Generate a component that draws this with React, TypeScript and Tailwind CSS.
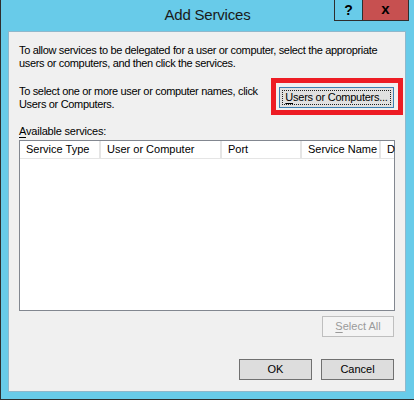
const columns = [
  { label: "Service Type", width: "w-[81px]" },
  { label: "User or Computer", width: "w-[121px]" },
  { label: "Port", width: "w-[80px]" },
  { label: "Service Name", width: "w-[79px]" },
  { label: "Description", width: "w-[14px]" },
];

function U({ children }: { children: string }) {
  return <span className="underline underline-offset-2">{children}</span>;
}

export default function App() {
  return (
    <div className="w-[414px] h-[400px] bg-[#68cbe9] border-l border-b border-[#2e2e2e] flex flex-col font-['Liberation_Sans',Arial,sans-serif] text-[11px] text-black">
      {/* Title bar */}
      <div className="relative h-[31px] flex items-center justify-center">
        <span className="text-[15px] text-[#1a1a1a] -mt-[1px] tracking-[-0.2px]">Add Services</span>
        <div className="absolute top-0 right-[5px] h-[21px] flex border-x border-b border-[#2e2e2e]">
          <div className="w-[27px] flex items-center justify-center font-bold text-[14px]">?</div>
          <div className="w-[46px] flex items-center justify-center bg-[#c75050] border-l border-[#2e2e2e] font-bold text-[15px] pb-[2px]">
            x
          </div>
        </div>
      </div>

      {/* Client area */}
      <div className="ml-[7px] w-[398px] h-[361px] border border-[#8fb8cc] bg-[#f0f0f0] pt-[12px] px-[10px] flex flex-col leading-[13px]">
        <p className="tracking-[-0.33px]">
          To allow services to be delegated for a user or computer, select the appropriate users or computers, and then
          click the services.
        </p>

        <div className="mt-[8px] flex items-start justify-between">
          <p className="mt-[7px] w-[252px] tracking-[-0.33px]">
            To select one or more user or computer names, click Users or Computers.
          </p>
          <div className="-mr-[8px] w-[132px] h-[37px] shrink-0 border-[5px] border-[#ed1c24] pt-[4px] pl-[3px]">
            <button className="w-[115px] h-[21px] border border-[#3c7fb1] bg-[#e1e1e1] p-[2px]">
              <div className="h-full border border-dotted border-[#222] flex items-center justify-center whitespace-nowrap tracking-[-0.25px]">
                <span>
                  <U>U</U>sers or Computers...
                </span>
              </div>
            </button>
          </div>
        </div>

        <div className="mt-[10px] tracking-[-0.2px]">
          <U>A</U>vailable services:
        </div>

        <div className="mt-[2px] h-[171px] border border-[#828790] bg-white">
          <div className="flex h-[18px] border-b border-[#e5e5e5] whitespace-nowrap">
            {columns.map((c, i) => (
              <div
                key={c.label}
                className={`${c.width} shrink-0 pl-[6px] flex items-center overflow-hidden ${
                  i < columns.length - 1 ? "border-r-2 border-[#e5e5e5]" : ""
                }`}
              >
                {i < columns.length - 1 ? c.label : "D"}
              </div>
            ))}
          </div>
        </div>

        <div className="mt-[5px] flex justify-end pr-[1px]">
          <button disabled className="w-[72px] h-[21px] border border-[#bfbfbf] bg-[#f4f4f4] text-[#9a9a9a]">
            <U>S</U>elect All
          </button>
        </div>

        <div className="mt-[22px] flex justify-end gap-[9px] pr-[1px]">
          <button className="w-[73px] h-[21px] border border-[#707070] bg-[#dddddd]">OK</button>
          <button className="w-[73px] h-[21px] border border-[#707070] bg-[#dddddd]">Cancel</button>
        </div>
      </div>
    </div>
  );
}
